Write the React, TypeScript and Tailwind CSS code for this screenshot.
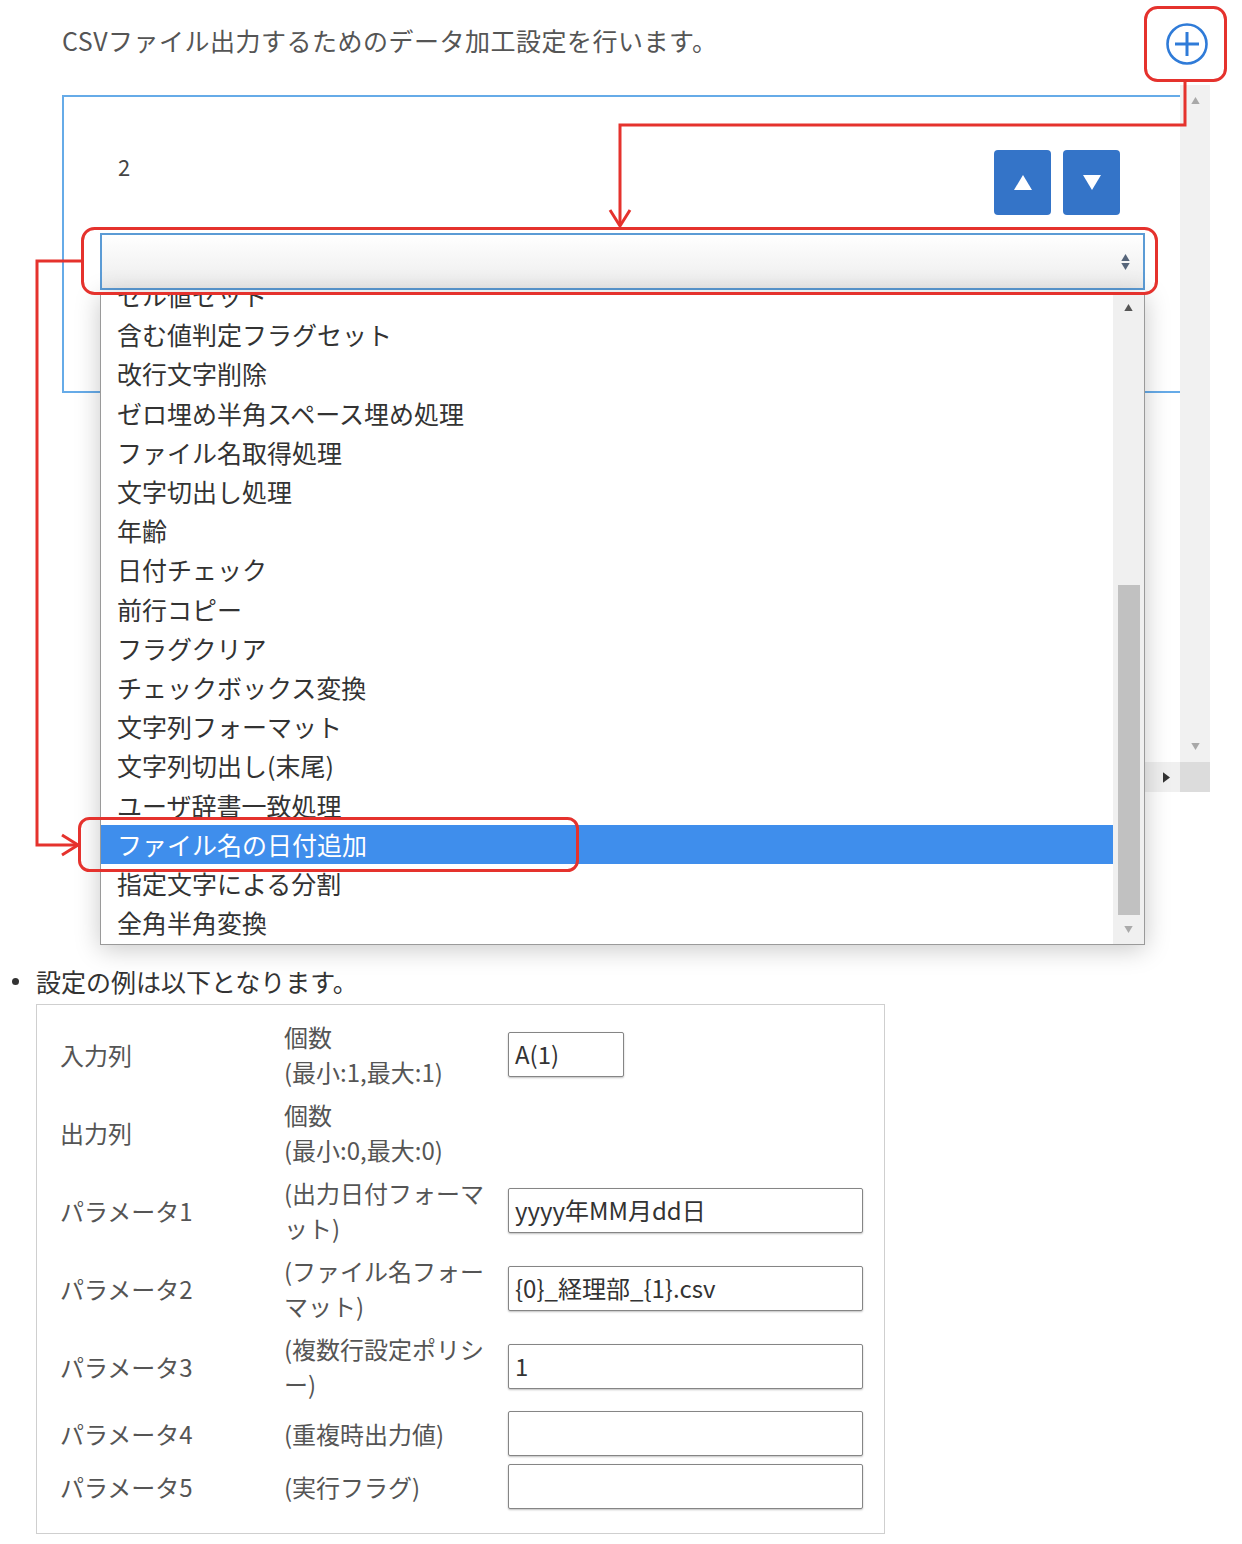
import React from "react";

const FONT = "font-['Noto_Sans_CJK_JP','Noto_Sans',sans-serif]";

const OPTIONS = [
  "セル値セット",
  "含む値判定フラグセット",
  "改行文字削除",
  "ゼロ埋め半角スペース埋め処理",
  "ファイル名取得処理",
  "文字切出し処理",
  "年齢",
  "日付チェック",
  "前行コピー",
  "フラグクリア",
  "チェックボックス変換",
  "文字列フォーマット",
  "文字列切出し(末尾)",
  "ユーザ辞書一致処理",
  "ファイル名の日付追加",
  "指定文字による分割",
  "全角半角変換",
];

const SELECTED = "ファイル名の日付追加";

type Row = {
  label: string;
  desc: string[];
  value?: string;
  short?: boolean;
  h: string;
};

const ROWS: Row[] = [
  { label: "入力列", desc: ["個数", "(最小:1,最大:1)"], value: "A(1)", short: true, h: "h-[78px]" },
  { label: "出力列", desc: ["個数", "(最小:0,最大:0)"], h: "h-[78px]" },
  { label: "パラメータ1", desc: ["(出力日付フォーマ", "ット)"], value: "yyyy年MM月dd日", h: "h-[78px]" },
  { label: "パラメータ2", desc: ["(ファイル名フォー", "マット)"], value: "{0}_経理部_{1}.csv", h: "h-[78px]" },
  { label: "パラメータ3", desc: ["(複数行設定ポリシ", "ー)"], value: "1", h: "h-[78px]" },
  { label: "パラメータ4", desc: ["(重複時出力値)"], value: "", h: "h-[57px]" },
  { label: "パラメータ5", desc: ["(実行フラグ)"], value: "", h: "h-[49px]" },
];

function Tri({ dir, className }: { dir: "up" | "down" | "right"; className?: string }) {
  const pts =
    dir === "up" ? "0,10 6,0 12,10" : dir === "down" ? "0,0 12,0 6,10" : "0,0 8,6 0,12";
  const vb = dir === "right" ? "0 0 8 12" : "0 0 12 10";
  return (
    <svg viewBox={vb} className={className}>
      <polygon points={pts} fill="currentColor" />
    </svg>
  );
}

// red callouts drawn over the screenshot
function Annotations() {
  const red = "#e5322d";
  return (
    <svg
      className="pointer-events-none absolute left-0 top-0 z-20"
      width={1242}
      height={958}
      viewBox="0 0 1242 958"
      fill="none"
    >
      <rect x={1145.5} y={7.5} width={80} height={73} rx={12} stroke={red} strokeWidth={3} />
      <rect x={82.5} y={228.5} width={1074} height={65} rx={12} stroke={red} strokeWidth={3} />
      <rect x={79.5} y={818.5} width={498} height={52} rx={10} stroke={red} strokeWidth={3} />
      <polyline points="1185,81 1185,125 620,125 620,225" stroke={red} strokeWidth={3} />
      <polyline points="610,210 620,226 630,210" stroke={red} strokeWidth={3} />
      <polyline points="82,261 37,261 37,845 77,845" stroke={red} strokeWidth={3} />
      <polyline points="62,835 78,845 62,855" stroke={red} strokeWidth={3} />
    </svg>
  );
}

function Dropdown() {
  return (
    <div className="absolute left-[100px] top-[292px] z-10 flex h-[653px] w-[1045px] border border-t-0 border-[#9a9a9a] bg-white shadow-[0_4px_24px_rgba(0,0,0,0.22)]">
      <div className="flex-1 overflow-hidden">
        <div className="-mt-[16px]">
          {OPTIONS.map((o) => (
            <div
              key={o}
              className={`flex h-[39.2px] items-center pl-[16px] text-[25px] leading-none ${
                o === SELECTED ? "bg-[#3f8eec] text-white" : "text-[#333]"
              }`}
            >
              {o}
            </div>
          ))}
        </div>
      </div>
      <div className="flex w-[31px] flex-col items-center bg-[#f0f0f0]">
        <Tri dir="up" className="mt-[12px] h-[7px] w-[11px] text-[#555]" />
        <div className="mt-[274px] h-[330px] w-[22px] bg-[#c1c1c1]" />
        <Tri dir="down" className="mt-[11px] h-[7px] w-[11px] text-[#aaa]" />
      </div>
    </div>
  );
}

function TopArea() {
  return (
    <div className="relative h-[958px] w-[1242px]">
      <div className="flex h-[85px] items-start justify-between">
        <div className="ml-[62px] pt-[23px] text-[25px] leading-[34px] tracking-[0.5px] text-[#555]">
          CSVファイル出力するためのデータ加工設定を行います。
        </div>
        <svg viewBox="0 0 44 44" className="mr-[33px] mt-[22px] h-[44px] w-[44px]">
          <circle cx={22} cy={22} r={19.5} fill="none" stroke="#2f7bd8" strokeWidth={2.6} />
          <line x1={22} y1={10} x2={22} y2={34} stroke="#2f7bd8" strokeWidth={3} />
          <line x1={10} y1={22} x2={34} y2={22} stroke="#2f7bd8" strokeWidth={3} />
        </svg>
      </div>

      <div className="ml-[62px] flex h-[707px] w-[1148px]">
        <div className="flex w-[1118px] flex-col">
          <div className="h-[10px]" />
          <div className="h-[298px] border-b-2 border-l-2 border-t-2 border-[#66abe8] bg-white pl-[36px] pr-[35px]">
            <div className="flex items-start justify-between pt-[53px]">
              <div className="ml-[18px] text-[22px] leading-[32px] text-[#444]">2</div>
              <div className="mr-[25px] flex gap-[12px]">
                <div className="flex h-[65px] w-[57px] items-center justify-center rounded-[4px] bg-[#3474c8]">
                  <Tri dir="up" className="h-[15px] w-[18px] text-white" />
                </div>
                <div className="flex h-[65px] w-[57px] items-center justify-center rounded-[4px] bg-[#3474c8]">
                  <Tri dir="down" className="h-[15px] w-[18px] text-white" />
                </div>
              </div>
            </div>
            <div className="mt-[18px] flex h-[57px] items-center justify-end border-2 border-[#5b9bd5] bg-gradient-to-b from-white to-[#ececec] pr-[12px]">
              <div className="flex flex-col gap-[2px]">
                <Tri dir="up" className="h-[7px] w-[11px] text-[#56657a]" />
                <Tri dir="down" className="h-[7px] w-[11px] text-[#56657a]" />
              </div>
            </div>
          </div>
          <div className="flex-1" />
          <div className="flex h-[30px] justify-end">
            <div className="flex w-[80px] items-center justify-end bg-[#f0f0f0] pr-[10px]">
              <Tri dir="right" className="h-[11px] w-[7px] text-[#333]" />
            </div>
          </div>
        </div>
        <div className="flex w-[30px] flex-col">
          <div className="flex flex-1 flex-col items-center justify-between bg-[#f1f1f1] py-[12px]">
            <Tri dir="up" className="h-[7px] w-[11px] text-[#a8a8a8]" />
            <Tri dir="down" className="h-[7px] w-[11px] text-[#a8a8a8]" />
          </div>
          <div className="h-[30px] bg-[#dcdcdc]" />
        </div>
      </div>

      <Dropdown />
      <Annotations />
    </div>
  );
}

function Example() {
  return (
    <div>
      <div className="mt-[3px] flex h-[40px] items-center">
        <span className="ml-[12px] h-[7px] w-[7px] rounded-full bg-[#333]" />
        <span className="ml-[17px] text-[25px] leading-[40px] text-[#333]">設定の例は以下となります。</span>
      </div>
      <div className="ml-[36px] mt-[3px] w-[849px] border border-[#cfcfcf] pb-[22px] pl-[23px] pt-[10px] text-[24px] text-[#555]">
        {ROWS.map((r) => (
          <div key={r.label} className={`grid grid-cols-[224px_224px_355px] items-center ${r.h}`}>
            <div className="leading-[35px]">{r.label}</div>
            <div className="whitespace-nowrap leading-[35px]">
              {r.desc.map((d, i) => (
                <div key={i}>{d}</div>
              ))}
            </div>
            <div>
              {r.value !== undefined && (
                <div
                  className={`flex h-[45px] items-center rounded-[2px] border border-[#858585] bg-white px-[6px] leading-none text-[#333] shadow-[0_1px_2px_rgba(0,0,0,0.25)] ${
                    r.short ? "w-[116px]" : "w-[355px]"
                  }`}
                >
                  {r.value}
                </div>
              )}
            </div>
          </div>
        ))}
      </div>
    </div>
  );
}

export default function App() {
  return (
    <div className={`${FONT} h-[1544px] w-[1242px] overflow-hidden bg-white`}>
      <TopArea />
      <Example />
    </div>
  );
}
